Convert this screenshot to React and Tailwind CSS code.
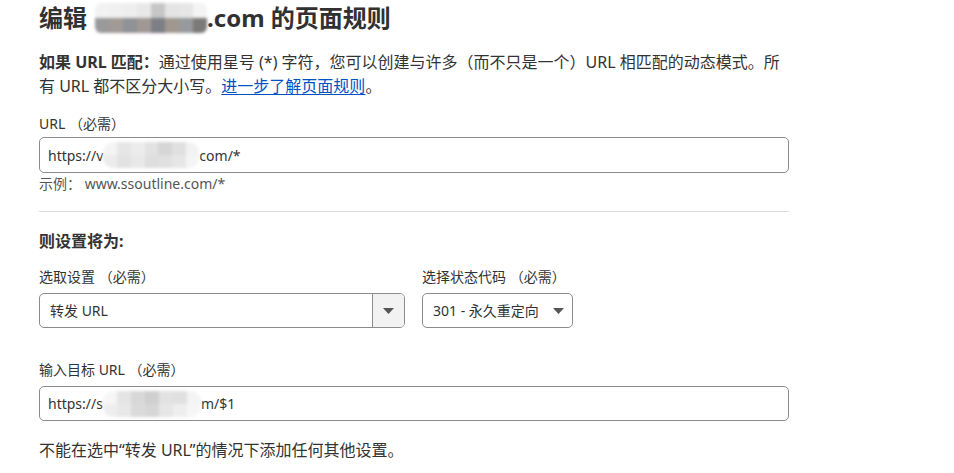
import React from 'react';

const Blur = ({ cells, className }) => (
  <span className={`inline-flex align-middle blur-[1.5px] overflow-hidden ${className}`}>
    {cells.map((c, i) => (
      <span key={i} className="flex flex-col flex-1">
        <span className="flex-1" style={{ background: c[0] }} />
        <span className="flex-1" style={{ background: c[1] }} />
      </span>
    ))}
  </span>
);

const Caret = () => (
  <svg width="11" height="6" viewBox="0 0 11 6" className="shrink-0">
    <path d="M0 0h11L5.5 6z" fill="#555" />
  </svg>
);

const App = () => {
  return (
    <div className="min-h-screen bg-white text-[#333] font-['Noto_Sans','Noto_Sans_CJK_SC',sans-serif] px-[39px] pt-[2px]">
      <h1 className="flex items-center text-[24px] font-bold leading-[32px] text-[#313131]">
        <span>编辑</span>
        <Blur
          className="w-[112px] h-[30px] ml-[8px] rounded-[6px]"
          cells={[
            ['#f2f2f2', '#9a9a9a'],
            ['#f0f0f0', '#a19a96'],
            ['#eeeeee', '#8f9296'],
            ['#e8e8e8', '#a09894'],
            ['#c6c6c6', '#7d7f86'],
            ['#e4e4e4', '#a0988f'],
            ['#e6e6e6', '#969a9e'],
            ['#f4f4f4', '#7c7a78'],
          ]}
        />
        <span>.com 的页面规则</span>
      </h1>

      <p className="mt-[16px] text-[16px] leading-[24px]">
        <span className="block whitespace-nowrap">
          <b>如果 URL 匹配：</b>通过使用星号 (*) 字符，您可以创建与许多（而不只是一个）URL 相匹配的动态模式。所
        </span>
        <span className="block whitespace-nowrap">
          有 URL 都不区分大小写。<a href="#" className="text-[#0051c3] underline underline-offset-2">进一步了解页面规则</a>。
        </span>
      </p>

      <div className="w-[750px]">
        <label className="block mt-[16px] text-[14px] leading-[20px]">URL （必需）</label>
        <div className="mt-[3px] h-[36px] rounded-[5px] border border-[#8c8c8c] flex items-center px-[8px] text-[14px]">
          <span>https://v</span>
          <Blur
            className="w-[96px] h-[26px] rounded-[10px]"
            cells={[
              ['#f4f4f4', '#ececec'],
              ['#e6e6e6', '#e2e2e2'],
              ['#ececec', '#e8e8e8'],
              ['#e2e2e2', '#dedede'],
              ['#d6d6d6', '#e0e0e0'],
              ['#e0e0e0', '#e6e6e6'],
              ['#f2f2f2', '#f4f4f4'],
            ]}
          />
          <span>com/*</span>
        </div>
        <p className="mt-[2px] text-[14px] leading-[18px] text-[#555]">
          示例： www.ssoutline.com/*
        </p>

        <hr className="mt-[18px] border-0 h-px bg-[#dcdcdc]" />

        <h2 className="mt-[17px] text-[16px] font-bold leading-[24px]">则设置将为:</h2>

        <div className="mt-[14px] flex gap-[17px] text-[14px]">
          <div className="w-[366px]">
            <label className="block leading-[20px]">选取设置 （必需）</label>
            <div className="mt-[6px] h-[35px] rounded-[5px] border border-[#8c8c8c] flex overflow-hidden">
              <span className="flex-1 flex items-center px-[10px]">转发 URL</span>
              <span className="w-[32px] border-l border-[#8c8c8c] bg-[#f2f2f2] flex items-center justify-center">
                <Caret />
              </span>
            </div>
          </div>
          <div>
            <label className="block leading-[20px]">选择状态代码 （必需）</label>
            <div className="mt-[6px] w-[151px] h-[35px] rounded-[5px] border border-[#8c8c8c] flex items-center justify-between pl-[10px] pr-[8px]">
              <span>301 - 永久重定向</span>
              <Caret />
            </div>
          </div>
        </div>

        <label className="block mt-[32px] text-[14px] leading-[20px]">输入目标 URL （必需）</label>
        <div className="mt-[6px] h-[35px] rounded-[5px] border border-[#8c8c8c] flex items-center px-[8px] text-[14px]">
          <span>https://s</span>
          <Blur
            className="w-[98px] h-[26px] rounded-[10px]"
            cells={[
              ['#f6f6f6', '#eeeeee'],
              ['#e4e4e4', '#e8e8e8'],
              ['#d8d8d8', '#dadada'],
              ['#cfcfcf', '#d6d6d6'],
              ['#e2e2e2', '#e6e6e6'],
              ['#e0e0e0', '#eeeeee'],
              ['#f4f4f4', '#f6f6f6'],
            ]}
          />
          <span>m/$1</span>
        </div>

        <p className="mt-[17px] text-[16px] leading-[24px]">不能在选中“转发 URL”的情况下添加任何其他设置。</p>
      </div>
    </div>
  );
};

export default App;
